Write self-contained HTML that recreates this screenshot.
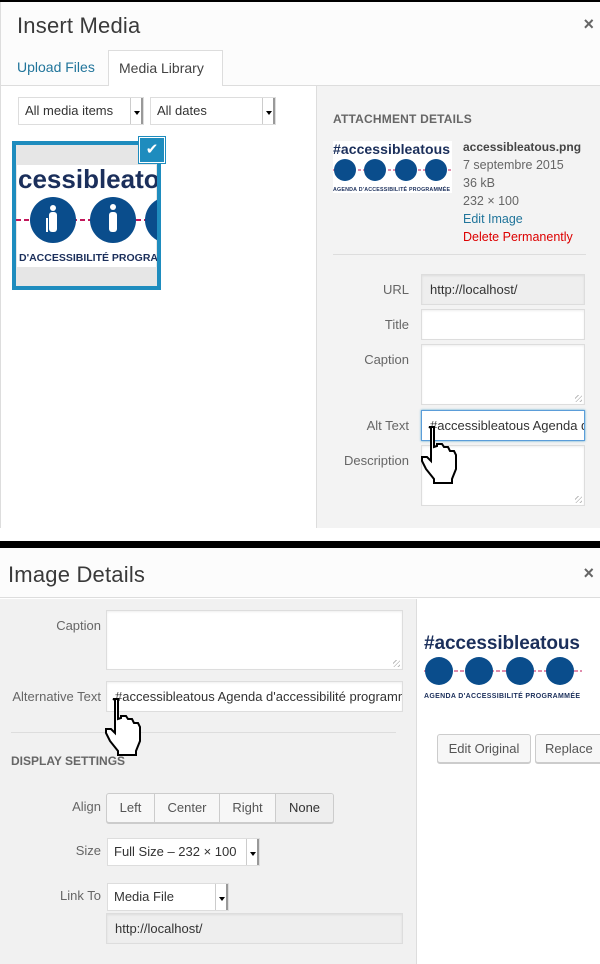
<!DOCTYPE html>
<html><head><meta charset="utf-8"><style>
*{box-sizing:border-box;margin:0;padding:0}
body{width:600px;height:964px;position:relative;background:#fff;font-family:"Liberation Sans",sans-serif;color:#444;font-size:13px;overflow:hidden}
.a{position:absolute}
.inp{position:absolute;background:#fff;border:1px solid #ddd;box-shadow:inset 0 1px 2px rgba(0,0,0,.07);font-size:13px;color:#333;padding:0 8px;white-space:nowrap;overflow:hidden}
.lbl{position:absolute;text-align:right;color:#666;font-size:13px}
.sel{position:absolute;background:#fff;border:1px solid #ddd;font-size:13px;color:#333;padding:0 6px}
.sel:after{content:"";position:absolute;right:0;top:0;bottom:0;width:10px;border-left:1px solid #ccc;border-right:2px solid #999;background:#fff}
.sel i{position:absolute;right:3px;top:50%;width:0;height:0;border-left:3px solid transparent;border-right:3px solid transparent;border-top:4px solid #000;z-index:2}
.btn{position:absolute;background:#f7f7f7;border:1px solid #ccc;border-radius:3px;font-size:13px;color:#555;text-align:center;box-shadow:0 1px 0 #ccc}
.grip{position:absolute;right:2px;bottom:2px;width:7px;height:7px;background:repeating-linear-gradient(135deg,transparent 0 2px,#bbb 2px 3px)}
</style></head><body>
<!-- TOP -->
<div class="a" style="left:0;top:0;width:600px;height:528px;background:#fcfcfc;border-left:1px solid #ddd"></div>
<div class="a" style="left:0;top:0;width:600px;height:2px;background:#000"></div>
<div class="a" style="left:17px;top:13px;font-size:22px;color:#3a3a3a;letter-spacing:.2px">Insert Media</div>
<div class="a" style="right:6px;top:14px;font-size:18px;color:#666;font-weight:bold">×</div>
<div class="a" style="left:17px;top:59px;font-size:14px;color:#21759b">Upload Files</div>
<div class="a" style="left:0;top:85px;width:600px;height:1px;background:#ddd"></div>
<div class="a" style="left:108px;top:50px;width:115px;height:36px;background:#fff;border:1px solid #ddd;border-bottom:none;font-size:14px;color:#444;padding:9px 0 0 10px">Media Library</div>
<div class="a" style="left:1px;top:86px;width:315px;height:442px;background:#fff"></div>
<div class="a" style="left:316px;top:86px;width:284px;height:442px;background:#f3f3f3;border-left:1px solid #ddd"></div>
<div class="sel" style="left:18px;top:97px;width:126px;height:28px;line-height:26px">All media items<i></i></div>
<div class="sel" style="left:150px;top:97px;width:126px;height:28px;line-height:26px">All dates<i></i></div>
<div class="a" style="left:12px;top:141px;width:149px;height:149px;border:4px solid #1e8cbe;background:#eee;overflow:hidden">
<svg width="141" height="141" viewBox="0 0 141 141"><rect x="0" y="0" width="141" height="141" fill="#e6e6e6"/><rect x="1" y="20" width="139" height="102" fill="#fff"/>
<text x="2" y="43" font-family="Liberation Sans" font-weight="bold" font-size="26" fill="#1b2f5b">cessibleato</text>
<line x1="0" y1="75" x2="141" y2="75" stroke="#c2185b" stroke-dasharray="5 3" stroke-width="2"/>
<circle cx="37" cy="75" r="23" fill="#0a4d8c"/><circle cx="97" cy="75" r="23" fill="#0a4d8c"/><circle cx="152" cy="75" r="23" fill="#0a4d8c"/>
<rect x="33" y="67" width="8" height="20" fill="#fff" rx="3"/><circle cx="37" cy="63" r="3" fill="#fff"/><rect x="30" y="73" width="2" height="14" fill="#fff"/><rect x="93" y="67" width="8" height="20" fill="#fff" rx="3"/><circle cx="97" cy="62" r="3" fill="#fff"/>
<text x="3" y="116" font-family="Liberation Sans" font-weight="bold" font-size="10.5" fill="#1b2f5b">D'ACCESSIBILITÉ PROGRA</text></svg></div>
<div class="a" style="left:139px;top:137px;width:26px;height:26px;background:#1e8cbe;border:1px solid #fff;box-shadow:0 0 0 1px #1e8cbe;color:#fff;text-align:center;font-size:15px;line-height:24px">✔</div>
<div class="a" style="left:333px;top:112px;font-size:12px;color:#666;font-weight:bold;letter-spacing:.2px">ATTACHMENT DETAILS</div>
<svg class="a" style="left:333px;top:141px" width="119" height="52" viewBox="0 0 119 52"><rect width="119" height="52" fill="#fff"/>
<text x="0" y="13" font-family="Liberation Sans" font-weight="bold" font-size="14" fill="#1b2f5b" textLength="117">#accessibleatous</text>
<line x1="0" y1="29" x2="119" y2="29" stroke="#c2185b" stroke-dasharray="3 2"/>
<circle cx="12" cy="29" r="11" fill="#0a4d8c"/><circle cx="42" cy="29" r="11" fill="#0a4d8c"/><circle cx="73" cy="29" r="11" fill="#0a4d8c"/><circle cx="103" cy="29" r="11" fill="#0a4d8c"/>
<text x="0" y="50" font-family="Liberation Sans" font-weight="bold" font-size="5.3" fill="#1b2f5b" textLength="117">AGENDA D'ACCESSIBILITÉ PROGRAMMÉE</text></svg>
<div class="a" style="left:463px;top:138px;font-size:12.5px;line-height:18px;color:#666"><b style="color:#444;font-size:12px">accessibleatous.png</b><br>7 septembre 2015<br>36 kB<br>232 × 100<br><span style="color:#21759b">Edit Image</span><br><span style="color:#d00">Delete Permanently</span></div>
<div class="a" style="left:333px;top:254px;width:253px;height:1px;background:#ddd"></div>
<div class="lbl" style="left:330px;width:79px;top:282px">URL</div>
<div class="inp" style="left:421px;top:274px;width:164px;height:31px;line-height:29px;background:#eee">http://localhost/</div>
<div class="lbl" style="left:330px;width:79px;top:317px">Title</div>
<div class="inp" style="left:421px;top:309px;width:164px;height:31px"></div>
<div class="lbl" style="left:330px;width:79px;top:352px">Caption</div>
<div class="inp" style="left:421px;top:344px;width:164px;height:61px"><div class="grip"></div></div>
<div class="lbl" style="left:330px;width:79px;top:418px">Alt Text</div>
<div class="inp" style="left:421px;top:410px;width:164px;height:31px;line-height:29px;border-color:#5b9dd9;box-shadow:0 0 2px rgba(30,140,190,.8)">#accessibleatous Agenda d</div>
<div class="lbl" style="left:330px;width:79px;top:453px">Description</div>
<div class="inp" style="left:421px;top:445px;width:164px;height:61px"><div class="grip"></div></div>
<svg class="a" style="left:420px;top:425px" width="50" height="62" viewBox="0 0 50 62"><path d="M9 2 h5 v20 l3-1 v-2 h5 l2 3 h4 l2 4 h4 l2 4 v14 l-4 10 v4 h-18 v-4 l-8-10 -4-8 v-4 h5 l4 4 V3z" fill="#fff" stroke="#000" stroke-width="2" stroke-linejoin="miter"/></svg>
<div class="a" style="left:0;top:541px;width:600px;height:7px;background:#000"></div>
<!-- BOTTOM -->
<div class="a" style="left:0;top:548px;width:600px;height:50px;background:#fcfcfc;border-bottom:1px solid #ddd"></div>
<div class="a" style="left:8px;top:562px;font-size:22px;color:#3a3a3a;letter-spacing:.2px">Image Details</div>
<div class="a" style="right:6px;top:563px;font-size:18px;color:#666;font-weight:bold">×</div>
<div class="a" style="left:0;top:599px;width:416px;height:365px;background:#f1f1f1"></div>
<div class="a" style="left:416px;top:599px;width:184px;height:365px;background:#fff;border-left:1px solid #ddd"></div>
<div class="lbl" style="left:0;width:101px;top:618px">Caption</div>
<div class="inp" style="left:106px;top:610px;width:297px;height:60px"><div class="grip"></div></div>
<div class="lbl" style="left:0;width:101px;top:689px">Alternative Text</div>
<div class="inp" style="left:106px;top:681px;width:297px;height:31px;line-height:29px">#accessibleatous Agenda d'accessibilité programmée</div>
<div class="a" style="left:11px;top:732px;width:385px;height:1px;background:#ddd"></div>
<div class="a" style="left:11px;top:754px;font-size:12px;color:#666;font-weight:bold">DISPLAY SETTINGS</div>
<svg class="a" style="left:104px;top:697px" width="50" height="62" viewBox="0 0 50 62"><path d="M9 2 h5 v20 l3-1 v-2 h5 l2 3 h4 l2 4 h4 l2 4 v14 l-4 10 v4 h-18 v-4 l-8-10 -4-8 v-4 h5 l4 4 V3z" fill="#fff" stroke="#000" stroke-width="2"/></svg>
<div class="lbl" style="left:0;width:101px;top:799px">Align</div>
<div class="a" style="left:106px;top:793px;width:228px;height:30px;border:1px solid #ccc;border-radius:3px;background:#f7f7f7;display:flex;font-size:13px;color:#555;line-height:28px;box-shadow:0 1px 0 #ccc;overflow:hidden">
<div style="width:48px;text-align:center;border-right:1px solid #ccc">Left</div><div style="width:65px;text-align:center;border-right:1px solid #ccc">Center</div><div style="width:56px;text-align:center;border-right:1px solid #ccc">Right</div><div style="flex:1;text-align:center;background:#eee;color:#333">None</div></div>
<div class="lbl" style="left:0;width:101px;top:843px">Size</div>
<div class="sel" style="left:107px;top:838px;width:153px;height:28px;line-height:26px">Full Size – 232 × 100<i></i></div>
<div class="lbl" style="left:0;width:101px;top:888px">Link To</div>
<div class="sel" style="left:107px;top:883px;width:122px;height:28px;line-height:26px">Media File<i></i></div>
<div class="inp" style="left:106px;top:913px;width:297px;height:31px;line-height:29px;background:#eee">http://localhost/</div>
<svg class="a" style="left:424px;top:630px" width="158" height="72" viewBox="0 0 158 72"><rect width="158" height="72" fill="#fff"/>
<text x="0" y="19" font-family="Liberation Sans" font-weight="bold" font-size="19" fill="#1b2f5b" textLength="156">#accessibleatous</text>
<line x1="0" y1="41" x2="158" y2="41" stroke="#c2185b" stroke-dasharray="4 2"/>
<circle cx="15" cy="41" r="14" fill="#0a4d8c"/><circle cx="55" cy="41" r="14" fill="#0a4d8c"/><circle cx="96" cy="41" r="14" fill="#0a4d8c"/><circle cx="136" cy="41" r="14" fill="#0a4d8c"/>
<text x="0" y="68" font-family="Liberation Sans" font-weight="bold" font-size="7" fill="#1b2f5b" textLength="156">AGENDA D'ACCESSIBILITÉ PROGRAMMÉE</text></svg>
<div class="btn" style="left:437px;top:734px;width:94px;height:29px;line-height:27px">Edit Original</div>
<div class="btn" style="left:535px;top:734px;width:70px;height:29px;line-height:27px;text-align:left;padding-left:9px">Replace</div>
</body></html>
